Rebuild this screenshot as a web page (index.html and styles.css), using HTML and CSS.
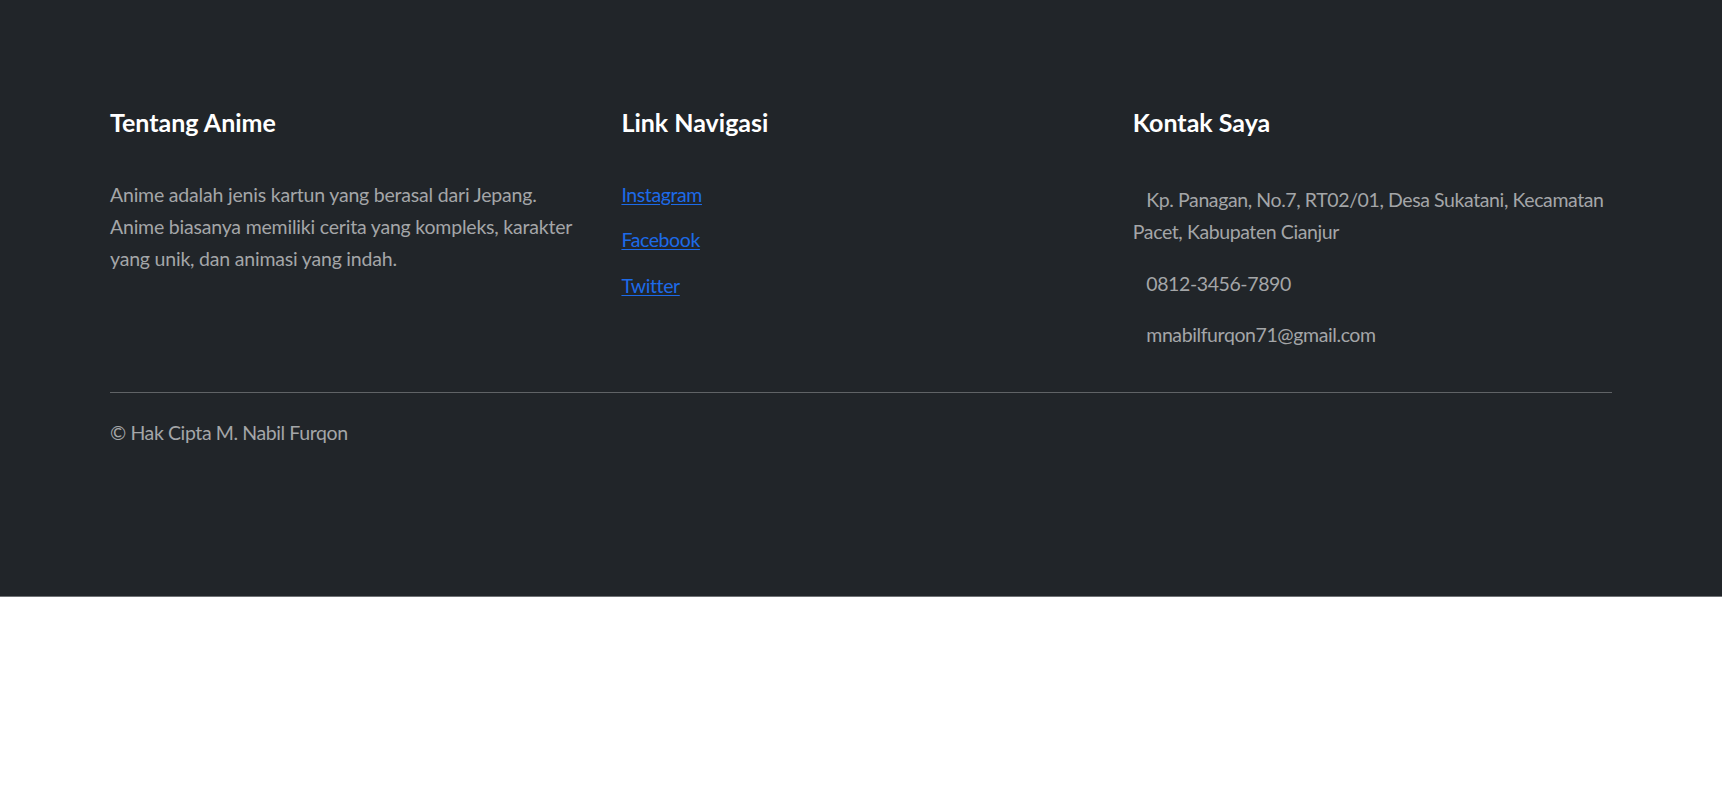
FILE: index.html
```html
<!DOCTYPE html>
<html lang="id">
<head>
<meta charset="utf-8">
<title>Footer</title>
<link rel="stylesheet" href="styles.css">
</head>
<body>
<footer class="footer">
  <div class="container">
    <div class="row">
      <section class="col">
        <h5 class="col-title">Tentang Anime</h5>
        <p class="about">Anime adalah jenis kartun yang berasal dari Jepang. Anime biasanya memiliki cerita yang kompleks, karakter yang unik, dan animasi yang indah.</p>
      </section>
      <section class="col">
        <h5 class="col-title">Link Navigasi</h5>
        <ul class="links">
          <li><a href="#">Instagram</a></li>
          <li><a href="#">Facebook</a></li>
          <li><a href="#">Twitter</a></li>
        </ul>
      </section>
      <section class="col">
        <h5 class="col-title">Kontak Saya</h5>
        <div class="contacts">
          <p class="contact"><span class="ic"></span>Kp. Panagan, No.7, RT02/01, Desa Sukatani, Kecamatan Pacet, Kabupaten Cianjur</p>
          <p class="contact"><span class="ic"></span>0812-3456-7890</p>
          <p class="contact"><span class="ic"></span>mnabilfurqon71@gmail.com</p>
        </div>
      </section>
    </div>
    <hr class="divider">
    <p class="copy">© Hak Cipta M. Nabil Furqon</p>
  </div>
</footer>
</body>
</html>
```
FILE: styles.css
```css
* { box-sizing: border-box; }

html, body {
  margin: 0;
  padding: 0;
  background: #ffffff;
}

body {
  font-family: "Lato", "Open Sans", sans-serif;
  font-size: 19.5px;
  letter-spacing: -0.4px;
  line-height: 32.3px;
  color: #a4a6a8;
}

.footer {
  background: #212529;
  padding: 106px 0 146.6px;
  border-bottom: 1px solid #6f7275;
}

.container {
  width: 1502px;
  margin: 0 auto;
}

.row {
  display: grid;
  grid-template-columns: repeat(3, 1fr);
  column-gap: 32.3px;
}

.col-title {
  margin: 0 0 40.4px;
  font-size: 25px;
  font-weight: 700;
  line-height: 32.3px;
  letter-spacing: 0;
  color: #ffffff;
}

.about {
  margin: 0;
  letter-spacing: -0.2px;
}

.links {
  list-style: none;
  margin: 0;
  padding: 0;
}

.links li {
  margin-bottom: 13.3px;
}

.links a {
  color: #1d6ae8;
  text-decoration: underline;
  text-underline-offset: 2px;
}

.contacts {
  padding-top: 5px;
}

.contact {
  margin: 0 0 19.4px;
}

.ic {
  display: inline-block;
  width: 13.4px;
}

.divider {
  margin: 20.9px 0 24px;
  border: 0;
  height: 1px;
  background: #606366;
}

.copy {
  margin: 0;
}
```
